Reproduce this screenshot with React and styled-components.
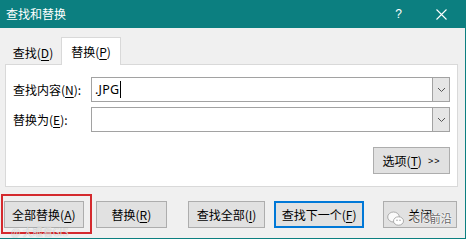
import React from 'react'
import styled, { createGlobalStyle } from 'styled-components'

const GlobalStyle = createGlobalStyle`
    html, body {
        margin: 0;
        padding: 0;
        background: #ffffff;
    }
    body {
        font-family: "Noto Sans CJK SC", "Noto Sans", sans-serif;
        font-size: 12px;
        color: #000;
    }
`

const TEAL = '#0c7f80'

const Dialog = styled.div`
    width: 465px;
    height: 238px;
    background: #f0f0f0;
    border-right: 1px solid ${TEAL};
    border-bottom: 1px solid ${TEAL};
    display: flex;
    flex-direction: column;
    overflow: hidden;
`

const TitleBar = styled.div`
    height: 28px;
    background: ${TEAL};
    color: #fff;
    display: flex;
    align-items: center;
    padding-left: 6px;
    font-size: 12px;
    line-height: 1;
`

const TitleText = styled.span`
    flex: 1;
    margin-top: -1px;
`

const HelpMark = styled.span`
    font-family: "Liberation Sans", sans-serif;
    font-size: 12px;
    margin-right: 34px;
    margin-top: -1px;
`

const CloseMark = styled.span`
    display: flex;
    margin-right: 18px;
`

const Body = styled.div`
    padding: 9px 8px 0 5px;
    display: flex;
    flex-direction: column;
`

const TabRow = styled.div`
    display: flex;
    align-items: flex-end;
    height: 27px;
    position: relative;
    z-index: 1;
`

const Tab = styled.div`
    height: ${p => (p.$active ? '28px' : '24px')};
    width: ${p => p.$w}px;
    box-sizing: border-box;
    display: flex;
    align-items: center;
    justify-content: center;
    background: ${p => (p.$active ? '#ffffff' : 'transparent')};
    border: 1px solid ${p => (p.$active ? '#d9d9d9' : 'transparent')};
    border-bottom: none;
    margin-bottom: ${p => (p.$active ? '-1px' : '0')};
    padding-bottom: ${p => (p.$active ? '1px' : '0')};
`

const Panel = styled.div`
    width: 453px;
    height: 123px;
    box-sizing: border-box;
    background: #fff;
    border: 1px solid #d9d9d9;
    padding: 12px 6px 0 7px;
    display: flex;
    flex-direction: column;
`

const FieldRow = styled.div`
    display: flex;
    align-items: center;
    margin-bottom: 5px;
`

const Label = styled.label`
    width: 78px;
    white-space: nowrap;
`

const Under = styled.span`
    text-decoration: underline;
    text-underline-offset: 2px;
`

const Combo = styled.div`
    width: 359px;
    height: 25px;
    box-sizing: border-box;
    border: 1px solid #a2a2a2;
    display: flex;
    background: #fff;
`

const ComboText = styled.div`
    flex: 1;
    display: flex;
    align-items: center;
    padding-left: 3px;
    font-family: "Noto Sans", sans-serif;
    font-size: 12.5px;
    letter-spacing: 0.2px;
`

const Caret = styled.span`
    width: 1px;
    height: 17px;
    background: #000;
    margin-left: 1px;
`

const DropButton = styled.div`
    width: 16px;
    height: 23px;
    background: #e5e5e5;
    border-left: 1px solid #a2a2a2;
    display: flex;
    align-items: center;
    justify-content: center;
`

const OptionsRow = styled.div`
    display: flex;
    justify-content: flex-end;
    margin-top: 10px;
    padding-right: 1px;
`

const Button = styled.div`
    position: relative;
    width: ${p => p.$w}px;
    height: 27px;
    margin-left: ${p => p.$ml || 0}px;
    box-sizing: border-box;
    background: #e1e1e1;
    border: ${p => (p.$focused ? '2px solid #0078d7' : '1px solid #adadad')};
    display: flex;
    align-items: center;
    justify-content: center;
    white-space: nowrap;
`

const Arrows = styled.span`
    font-family: "Liberation Sans", sans-serif;
    font-size: 9px;
    margin-left: 6px;
    letter-spacing: 1px;
`

const ButtonRow = styled.div`
    display: flex;
    margin: 14px 0 0 -1px;
`

const Highlight = styled.span`
    position: absolute;
    left: -4px;
    right: -9px;
    top: -8px;
    bottom: -7px;
    border: 2px solid #d42a2e;
    pointer-events: none;
`

const Watermark = styled.span`
    position: absolute;
    display: flex;
    align-items: center;
    white-space: nowrap;
    pointer-events: none;
`

const CornerMark = styled(Watermark)`
    left: 6px;
    bottom: -12px;
    font-size: 10px;
    color: rgba(255, 255, 255, 0.75);
    text-shadow: 0 0 1px rgba(0, 0, 0, 0.35);
`

const WechatMark = styled(Watermark)`
    left: 3px;
    top: 9px;
    gap: 8px;
    font-size: 11px;
    line-height: 15px;
    color: #666;
    text-shadow: 0 0 1px #fff, 0 0 2px #fff, 0 0 2px #fff;
`

function Chevron() {
    return (
        <svg width="9" height="6" viewBox="0 0 9 6">
            <path d="M1 1 L4.5 4.5 L8 1" fill="none" stroke="#555" strokeWidth="1" />
        </svg>
    )
}

function CloseIcon() {
    return (
        <svg width="11" height="11" viewBox="0 0 11 11">
            <path d="M0.5 0.5 L10.5 10.5 M10.5 0.5 L0.5 10.5" stroke="#fff" strokeWidth="1.1" />
        </svg>
    )
}

function WechatIcon() {
    return (
        <svg width="17" height="15" viewBox="0 0 17 15">
            <ellipse cx="6.5" cy="6" rx="5.8" ry="5" fill="#fafafa" stroke="#9a9a9a" strokeWidth="0.8" />
            <ellipse cx="11.5" cy="10" rx="5" ry="4.2" fill="#ffffff" stroke="#9a9a9a" strokeWidth="0.8" />
            <circle cx="10" cy="9.3" r="0.7" fill="#999" />
            <circle cx="13" cy="9.3" r="0.7" fill="#999" />
        </svg>
    )
}

function ComboBox({ value, caret }) {
    return (
        <Combo>
            <ComboText>
                {value}
                {caret && <Caret />}
            </ComboText>
            <DropButton><Chevron /></DropButton>
        </Combo>
    )
}

export default function App() {
    return (
        <>
            <GlobalStyle />
            <Dialog>
                <TitleBar>
                    <TitleText>查找和替换</TitleText>
                    <HelpMark>?</HelpMark>
                    <CloseMark><CloseIcon /></CloseMark>
                </TitleBar>
                <Body>
                    <TabRow>
                        <Tab $w={56}>查找(<Under>D</Under>)</Tab>
                        <Tab $w={60} $active>替换(<Under>P</Under>)</Tab>
                    </TabRow>
                    <Panel>
                        <FieldRow>
                            <Label>查找内容(<Under>N</Under>):</Label>
                            <ComboBox value=".JPG" caret />
                        </FieldRow>
                        <FieldRow>
                            <Label>替换为(<Under>E</Under>):</Label>
                            <ComboBox value="" />
                        </FieldRow>
                        <OptionsRow>
                            <Button $w={77}>选项(<Under>T</Under>)<Arrows>&gt;&gt;</Arrows></Button>
                        </OptionsRow>
                    </Panel>
                    <ButtonRow>
                        <Button $w={80}>
                            全部替换(<Under>A</Under>)
                            <Highlight />
                            <CornerMark>@ 大眼看GIS</CornerMark>
                        </Button>
                        <Button $w={72} $ml={12}>替换(<Under>R</Under>)</Button>
                        <Button $w={77} $ml={21}>查找全部(<Under>I</Under>)</Button>
                        <Button $w={91} $ml={9} $focused>查找下一个(<Under>F</Under>)</Button>
                        <Button $w={74} $ml={19}>
                            关闭
                            <WechatMark><WechatIcon /><span>GIS前沿</span></WechatMark>
                        </Button>
                    </ButtonRow>
                </Body>
            </Dialog>
        </>
    )
}
